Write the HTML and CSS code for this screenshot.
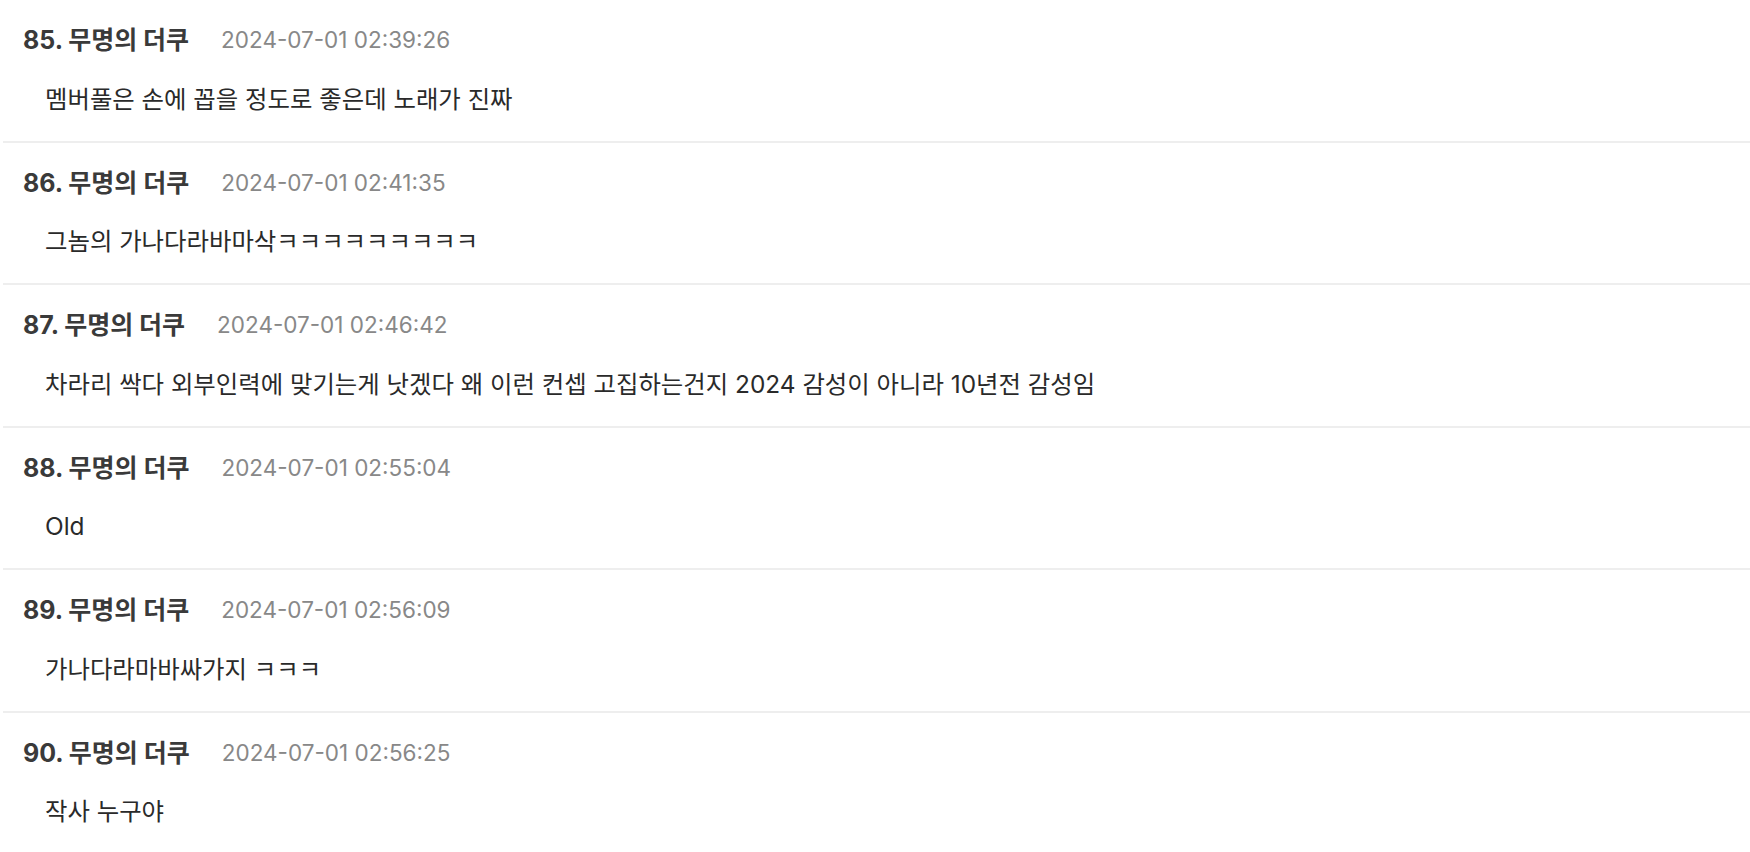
FILE: index.html
```html
<!DOCTYPE html>
<html lang="ko">
<head>
<meta charset="utf-8">
<title>댓글</title>
<link rel="stylesheet" href="styles.css">
</head>
<body>
<ul class="comments">
  <li class="comment">
    <div class="comment-head"><span class="comment-author">85. 무명의 더쿠</span><span class="comment-date">2024-07-01 02:39:26</span></div>
    <p class="comment-body">멤버풀은 손에 꼽을 정도로 좋은데 노래가 진짜</p>
  </li>
  <li class="comment">
    <div class="comment-head"><span class="comment-author">86. 무명의 더쿠</span><span class="comment-date">2024-07-01 02:41:35</span></div>
    <p class="comment-body">그놈의 가나다라바마삭ㅋㅋㅋㅋㅋㅋㅋㅋㅋ</p>
  </li>
  <li class="comment">
    <div class="comment-head"><span class="comment-author">87. 무명의 더쿠</span><span class="comment-date">2024-07-01 02:46:42</span></div>
    <p class="comment-body">차라리 싹다 외부인력에 맞기는게 낫겠다 왜 이런 컨셉 고집하는건지 2024 감성이 아니라 10년전 감성임</p>
  </li>
  <li class="comment">
    <div class="comment-head"><span class="comment-author">88. 무명의 더쿠</span><span class="comment-date">2024-07-01 02:55:04</span></div>
    <p class="comment-body">Old</p>
  </li>
  <li class="comment">
    <div class="comment-head"><span class="comment-author">89. 무명의 더쿠</span><span class="comment-date">2024-07-01 02:56:09</span></div>
    <p class="comment-body">가나다라마바싸가지 ㅋㅋㅋ</p>
  </li>
  <li class="comment">
    <div class="comment-head"><span class="comment-author">90. 무명의 더쿠</span><span class="comment-date">2024-07-01 02:56:25</span></div>
    <p class="comment-body">작사 누구야</p>
  </li>
</ul>
</body>
</html>
```

FILE: styles.css
```css
html, body {
  margin: 0;
  padding: 0;
  background: #ffffff;
}

body {
  font-family: "Inter", "Noto Sans CJK KR", sans-serif;
  color: #2a2a2a;
}

.comments {
  list-style: none;
  margin: 0 0 0 3px;
  padding: 0;
}

.comment {
  padding: 23px 0 25px 20px;
  border-bottom: 2px solid #eeeeee;
}

.comment-head {
  display: flex;
  align-items: center;
  gap: 32px;
  height: 34px;
  line-height: 34px;
}

.comment-author {
  font-size: 25px;
  font-weight: 700;
  color: #3a3a3a;
}

.comment-date {
  font-size: 22.5px;
  color: #888888;
}

.comment-body {
  margin: 24.5px 0 0 22px;
  font-size: 24.4px;
  line-height: 34px;
  height: 34px;
  color: #2a2a2a;
}
```
